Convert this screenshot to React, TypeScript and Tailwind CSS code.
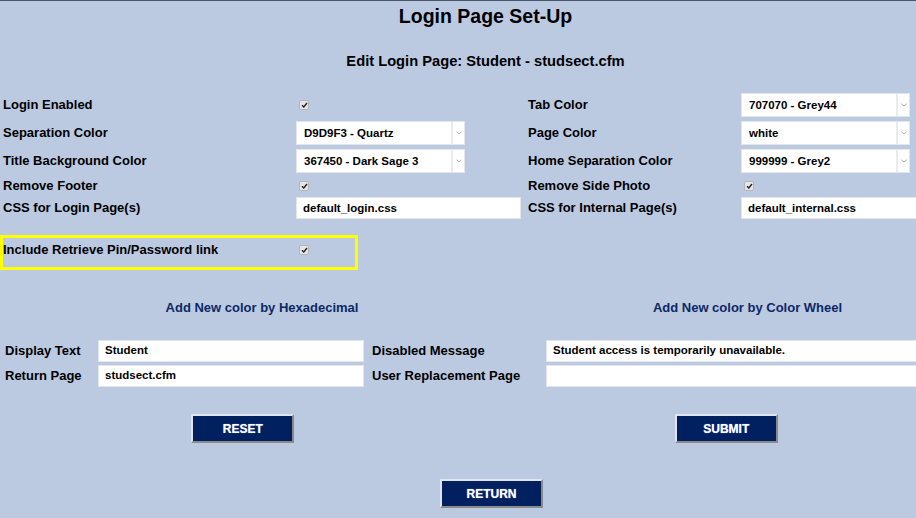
import React from "react";

const font = { fontFamily: '"Liberation Sans", Arial, sans-serif' };

function Check() {
  return (
    <span className="ml-[3px] inline-flex h-[10px] w-[10px] items-center justify-center rounded-[2px] border border-[#b5b5b5] bg-[#e6e6e6]">
      <svg width="7" height="6" viewBox="0 0 7 6">
        <polyline points="1,3.2 2.8,5 6,1" fill="none" stroke="#222" strokeWidth="1.4" />
      </svg>
    </span>
  );
}

function Select({ value, w }: { value: string; w: string }) {
  return (
    <div className={`flex h-[24px] ${w} items-stretch bg-white border border-[#e3e6ea]`}>
      <div className="flex flex-1 items-center pl-[7px] pt-[1px] text-[11.5px] font-bold text-black">{value}</div>
      <div className="flex w-[13px] items-center justify-center border-l-2 border-[#e8ebf0]">
        <svg width="6" height="4" viewBox="0 0 6 4">
          <polyline points="0.5,0.8 3,3 5.5,0.8" fill="none" stroke="#b0b0b0" strokeWidth="1" />
        </svg>
      </div>
    </div>
  );
}

function TextBox({ value, w }: { value: string; w: string }) {
  return (
    <div className={`flex h-[22px] ${w} items-center bg-white border border-[#e3e6ea] pl-[6px] pt-[1px] text-[11.5px] font-bold text-black`}>
      {value}
    </div>
  );
}

function Label({ children, pl = "pl-[3px]" }: { children: React.ReactNode; pl?: string }) {
  return <div className={`flex items-center ${pl} text-[13px] font-bold text-black`}>{children}</div>;
}

function NavyButton({ label }: { label: string }) {
  return (
    <button
      className="h-[29px] w-[103px] bg-[#002060] text-[12px] font-bold text-white border-2 border-t-[#dfe5ef] border-l-[#dfe5ef] border-b-[#8a8a8a] border-r-[#8a8a8a]"
      style={{ ...font, textShadow: "0 0 1px #9fb0ff" }}
    >
      {label}
    </button>
  );
}

export default function App() {
  return (
    <div className="h-[518px] w-[916px] overflow-hidden bg-[#bccae1] border-t border-[#4c566b]" style={font}>
      <div className="w-[971px]">
        <h1 className="pt-[4px] text-center text-[19.5px] font-bold leading-[23px] text-black">Login Page Set-Up</h1>
        <h2 className="mt-[24px] text-center text-[14.7px] font-bold leading-[18px] text-black">
          Edit Login Page: Student - studsect.cfm
        </h2>

        {/* main settings table */}
        <div className="mt-[21px] grid grid-cols-[296px_232px_213px_230px] grid-rows-[28px_28px_28px_22px_22px]">
          <Label>Login Enabled</Label>
          <div className="flex items-center"><Check /></div>
          <Label pl="pl-0">Tab Color</Label>
          <div className="flex items-center"><Select value="707070 - Grey44" w="w-[169px]" /></div>

          <Label>Separation Color</Label>
          <div className="flex items-center"><Select value="D9D9F3 - Quartz" w="w-[169px]" /></div>
          <Label pl="pl-0">Page Color</Label>
          <div className="flex items-center"><Select value="white" w="w-[169px]" /></div>

          <Label>Title Background Color</Label>
          <div className="flex items-center"><Select value="367450 - Dark Sage 3" w="w-[169px]" /></div>
          <Label pl="pl-0">Home Separation Color</Label>
          <div className="flex items-center"><Select value="999999 - Grey2" w="w-[169px]" /></div>

          <Label>Remove Footer</Label>
          <div className="flex items-center"><Check /></div>
          <Label pl="pl-0">Remove Side Photo</Label>
          <div className="flex items-center"><Check /></div>

          <Label>CSS for Login Page(s)</Label>
          <div className="flex items-center"><TextBox value="default_login.css" w="w-[225px]" /></div>
          <Label pl="pl-0">CSS for Internal Page(s)</Label>
          <div className="flex items-center"><TextBox value="default_internal.css" w="w-[225px]" /></div>
        </div>

        {/* highlighted option */}
        <div className="mt-[16px] flex h-[35px] w-[358px] items-center border-[3px] border-[#ffff00] pb-[6px]">
          <div className="w-[293px] text-[13px] font-bold text-black">Include Retrieve Pin/Password link</div>
          <Check />
        </div>

        <div className="mt-[30px] grid grid-cols-[524px_447px] text-center text-[13px] font-bold leading-[16px] text-[#0c2866]">
          <div>Add New color by Hexadecimal</div>
          <div>Add New color by Color Wheel</div>
        </div>

        <div className="mt-[22px] grid grid-cols-[98px_274px_174px_425px] grid-rows-[25px_25px]">
          <Label pl="pl-[5px]">Display Text</Label>
          <div className="flex items-center"><TextBox value="Student" w="w-[266px]" /></div>
          <Label pl="pl-0">Disabled Message</Label>
          <div className="flex items-center"><TextBox value="Student access is temporarily unavailable." w="w-[420px]" /></div>

          <Label pl="pl-[5px]">Return Page</Label>
          <div className="flex items-center"><TextBox value="studsect.cfm" w="w-[266px]" /></div>
          <Label pl="pl-0">User Replacement Page</Label>
          <div className="flex items-center"><TextBox value="" w="w-[420px]" /></div>
        </div>

        <div className="mt-[26px] grid grid-cols-2">
          <div className="flex justify-center"><NavyButton label="RESET" /></div>
          <div className="flex justify-center pr-[4px]"><NavyButton label="SUBMIT" /></div>
        </div>

        <div className="mt-[36px] flex justify-center pl-[12px]">
          <NavyButton label="RETURN" />
        </div>
      </div>
    </div>
  );
}
